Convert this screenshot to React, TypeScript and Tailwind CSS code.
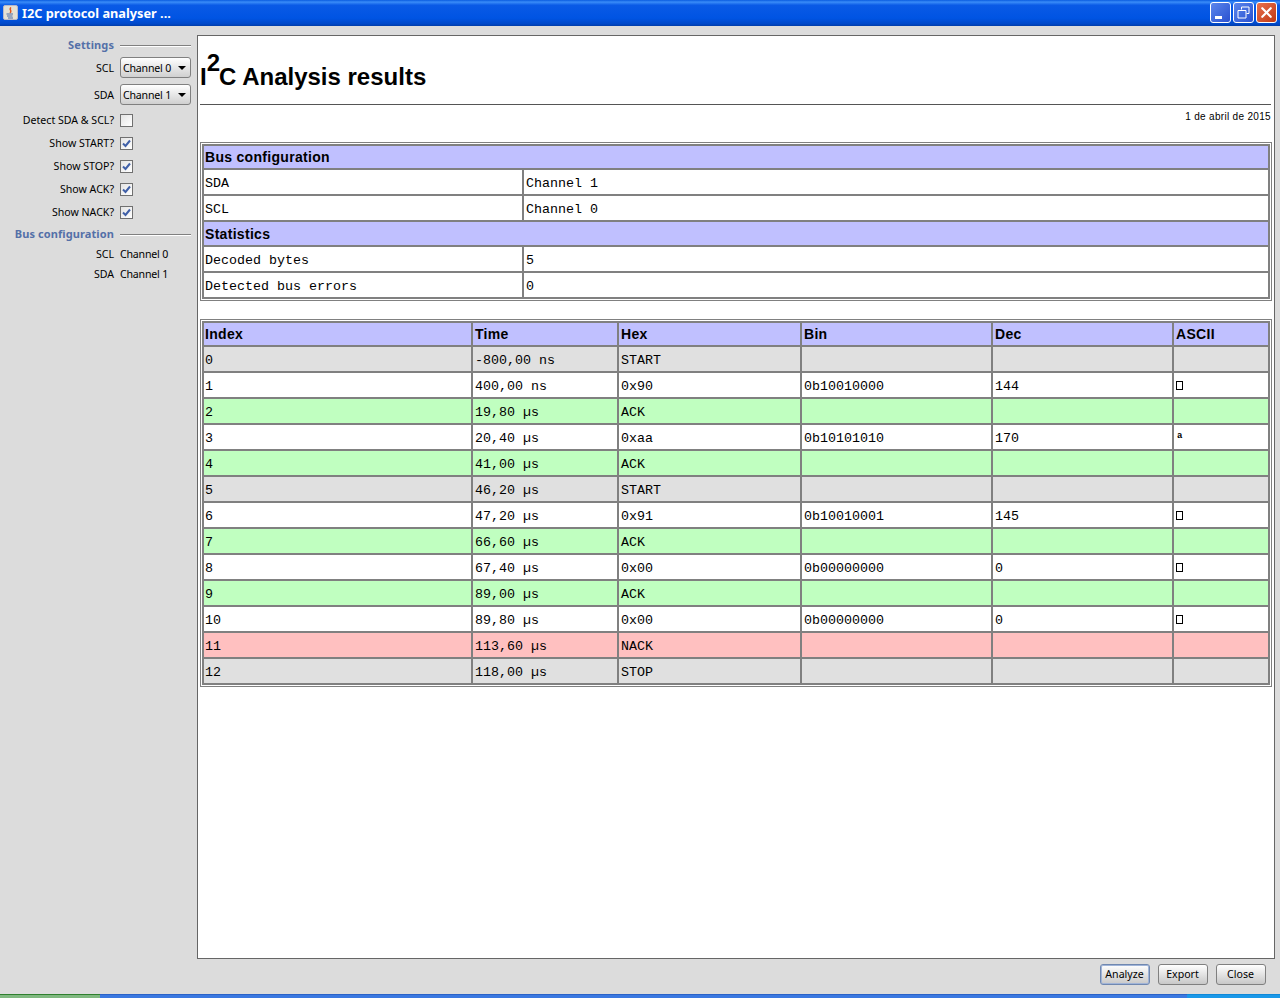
import { X } from "lucide-react";

const configRows = [
  { head: "Bus configuration", h: "h-[24px]" },
  { a: "SDA", b: "Channel 1" },
  { a: "SCL", b: "Channel 0" },
  { head: "Statistics", h: "h-[25px]" },
  { a: "Decoded bytes", b: "5" },
  { a: "Detected bus errors", b: "0" },
];

const columns = ["Index", "Time", "Hex", "Bin", "Dec", "ASCII"];

const dataRows = [
  { bg: "bg-[#e0e0e0]", cells: ["0", "-800,00 ns", "START", "", "", ""] },
  { bg: "bg-white", cells: ["1", "400,00 ns", "0x90", "0b10010000", "144", "box"] },
  { bg: "bg-[#c0ffc0]", cells: ["2", "19,80 µs", "ACK", "", "", ""] },
  { bg: "bg-white", cells: ["3", "20,40 µs", "0xaa", "0b10101010", "170", "ª"] },
  { bg: "bg-[#c0ffc0]", cells: ["4", "41,00 µs", "ACK", "", "", ""] },
  { bg: "bg-[#e0e0e0]", cells: ["5", "46,20 µs", "START", "", "", ""] },
  { bg: "bg-white", cells: ["6", "47,20 µs", "0x91", "0b10010001", "145", "box"] },
  { bg: "bg-[#c0ffc0]", cells: ["7", "66,60 µs", "ACK", "", "", ""] },
  { bg: "bg-white", cells: ["8", "67,40 µs", "0x00", "0b00000000", "0", "box"] },
  { bg: "bg-[#c0ffc0]", cells: ["9", "89,00 µs", "ACK", "", "", ""] },
  { bg: "bg-white", cells: ["10", "89,80 µs", "0x00", "0b00000000", "0", "box"] },
  { bg: "bg-[#ffc0c0]", cells: ["11", "113,60 µs", "NACK", "", "", ""] },
  { bg: "bg-[#e0e0e0]", cells: ["12", "118,00 µs", "STOP", "", "", ""] },
];

function SectionTitle({ title }: { title: string }) {
  return (
    <div className="flex h-[14px] items-center">
      <span className="w-[114px] pb-[2px] text-right text-[11px] font-bold tracking-[0.1px] text-[#5470a8]">{title}</span>
      <div className="ml-[6px] mt-[2px] w-[71px] border-t border-b border-t-[#808080] border-b-white" />
    </div>
  );
}

function Combo({ value }: { value: string }) {
  return (
    <div className="ml-[6px] flex h-[21px] w-[71px] items-center justify-between rounded-[3px] border border-[#808080] bg-linear-to-b from-white to-[#d0d0d0] pl-[2px] pr-[4px]">
      <span className="pt-[2px] tracking-[-0.2px]">{value}</span>
      <div className="h-0 w-0 border-x-[4px] border-t-[4px] border-x-transparent border-t-black" />
    </div>
  );
}

function Check({ checked }: { checked: boolean }) {
  return (
    <div className="ml-[6px] flex h-[13px] w-[13px] items-center justify-center border border-[#707070] bg-linear-to-br from-[#e4e4e4] to-white">
      {checked && (
        <svg width="9" height="9" viewBox="0 0 9 9">
          <path d="M1 4.5 L3.5 7 L8 1.5" fill="none" stroke="#4060a8" strokeWidth="2" />
        </svg>
      )}
    </div>
  );
}

function FormRow({
  label,
  children,
  className,
  labelClass,
}: {
  label: string;
  children: React.ReactNode;
  className: string;
  labelClass?: string;
}) {
  return (
    <div className={`flex items-center ${className}`}>
      <span className={`w-[114px] text-right ${labelClass ?? ""}`}>{label}</span>
      {children}
    </div>
  );
}

function Btn({ label, focused }: { label: string; focused?: boolean }) {
  return (
    <div
      className={`flex h-[21px] w-[50px] items-center justify-center rounded-[3px] border bg-linear-to-b from-white to-[#c8c8c8] pb-[1px] pr-[1px] ${
        focused ? "border-[#7088b0] ring-1 ring-inset ring-[#a0b4d8]" : "border-[#808080]"
      }`}
    >
      {label}
    </div>
  );
}

export default function App() {
  return (
    <div className="flex h-[998px] w-[1280px] flex-col overflow-hidden bg-[#dcdcdc] font-['Noto_Sans',sans-serif] text-[10.6px] leading-none text-black">
      {/* title bar */}
      <div className="flex h-[26px] shrink-0 items-center bg-[linear-gradient(to_bottom,#0a5ce0_0%,#3a8cf8_8%,#0a5ae6_20%,#0054e3_70%,#0048c8_92%,#003ca8_100%)] pb-[1px] pl-[3px] pr-[3px]">
        <div className="flex h-[15px] w-[15px] items-center justify-center rounded-[2px] border border-[#b8b8c8] bg-[#e4e0d4]">
          <svg width="11" height="12" viewBox="0 0 11 12">
            <path d="M6 0.5 C3.5 2.5 7.5 3.5 5 6" fill="none" stroke="#e05820" strokeWidth="1.5" />
            <path d="M1.5 7 H8 M2 9 H7.5 M3 11 H8" stroke="#4a6aa8" strokeWidth="1" />
          </svg>
        </div>
        <span className="ml-[4px] pt-[2px] text-[12.75px] font-bold text-white">I2C protocol analyser ...</span>
        <div className="ml-auto flex gap-[2px]">
          <div className="flex h-[21px] w-[21px] items-end rounded-[3px] border border-white bg-linear-to-br from-[#5c86ec] to-[#2a50d0] pb-[3px] pl-[4px]">
            <div className="h-[3px] w-[7px] bg-white" />
          </div>
          <div className="flex h-[21px] w-[21px] items-center justify-center rounded-[3px] border border-white bg-linear-to-br from-[#5c86ec] to-[#2a50d0]">
            <svg width="13" height="13" viewBox="0 0 13 13" fill="none" stroke="white">
              <path d="M4.5 3.5 V1 H12 V7.5 H9.5" />
              <path d="M1 4.5 H9 V12 H1 Z" />
            </svg>
          </div>
          <div className="flex h-[21px] w-[21px] items-center justify-center rounded-[3px] border border-white bg-linear-to-br from-[#e8704c] to-[#c03810]">
            <X size={17} strokeWidth={3} color="white" />
          </div>
        </div>
      </div>

      <div className="flex min-h-0 flex-1 flex-col pb-[4px]">
        <div className="flex">
          {/* sidebar */}
          <div className="w-[197px] shrink-0 pt-[12px]">
            <SectionTitle title="Settings" />
            <FormRow label="SCL" className="mt-[5px] h-[21px]" labelClass="pt-[2px]">
              <Combo value="Channel 0" />
            </FormRow>
            <FormRow label="SDA" className="mt-[6px] h-[21px]" labelClass="pt-[2px]">
              <Combo value="Channel 1" />
            </FormRow>
            <FormRow label="Detect SDA & SCL?" className="mt-[9px] h-[13px]">
              <Check checked={false} />
            </FormRow>
            <FormRow label="Show START?" className="mt-[10px] h-[13px]">
              <Check checked />
            </FormRow>
            <FormRow label="Show STOP?" className="mt-[10px] h-[13px]">
              <Check checked />
            </FormRow>
            <FormRow label="Show ACK?" className="mt-[10px] h-[13px]">
              <Check checked />
            </FormRow>
            <FormRow label="Show NACK?" className="mt-[10px] h-[13px]">
              <Check checked />
            </FormRow>
            <div className="mt-[8px]">
              <SectionTitle title="Bus configuration" />
            </div>
            <FormRow label="SCL" className="mt-[6px] h-[14px]">
              <span className="ml-[6px] tracking-[-0.2px]">Channel 0</span>
            </FormRow>
            <FormRow label="SDA" className="mt-[6px] h-[14px]">
              <span className="ml-[6px] tracking-[-0.2px]">Channel 1</span>
            </FormRow>
          </div>

          {/* report panel */}
          <div className="mt-[9px] h-[924px] w-[1078px] border border-[#666666] bg-white px-[2px]">
            <div className="mr-[1px] mt-[24px] flex h-[45px] items-end border-b border-b-[#555555] pb-[15px] font-['Liberation_Sans',sans-serif] text-[24px] font-bold leading-none">
              I<sup className="relative -top-[14px] -mr-[1px] align-baseline text-[24px] leading-none">2</sup>C Analysis results
            </div>
            <div className="mr-[1px] mt-[7px] text-right font-['Liberation_Sans',sans-serif] text-[10px] tracking-[0.32px]">
              1 de abril de 2015
            </div>

            <div className="mt-[20px] border border-[#808080] p-[1px]">
              <table className="w-full table-fixed border-collapse font-['Liberation_Mono',monospace] text-[13.33px]">
                <colgroup>
                  <col className="w-[320px]" />
                  <col />
                </colgroup>
                <tbody>
                  {configRows.map((row, i) =>
                    row.head ? (
                      <tr key={i} className={row.h}>
                        <td
                          colSpan={2}
                          className="border-2 border-[#808080] bg-[#c0c0ff] pl-[1px] pr-[2px] font-['Liberation_Sans',sans-serif] text-[14px] font-bold leading-none tracking-[0.3px]"
                        >
                          {row.head}
                        </td>
                      </tr>
                    ) : (
                      <tr key={i} className="h-[26px]">
                        <td className="border-2 border-[#808080] pl-[1px] pr-[2px] pt-[4px] leading-none">{row.a}</td>
                        <td className="border-2 border-[#808080] px-[2px] pt-[4px] leading-none">{row.b}</td>
                      </tr>
                    )
                  )}
                </tbody>
              </table>
            </div>

            <div className="mt-[18px] border border-[#808080] p-[1px]">
              <table className="w-full table-fixed border-collapse font-['Liberation_Mono',monospace] text-[13.33px]">
                <colgroup>
                  <col className="w-[269px]" />
                  <col className="w-[146px]" />
                  <col className="w-[183px]" />
                  <col className="w-[191px]" />
                  <col className="w-[181px]" />
                  <col />
                </colgroup>
                <thead>
                  <tr className="h-[24px]">
                    {columns.map((c, j) => (
                      <th
                        key={c}
                        className={`border-2 border-[#808080] bg-[#c0c0ff] pr-[2px] text-left font-['Liberation_Sans',sans-serif] text-[14px] font-bold leading-none tracking-[0.3px] ${
                          j === 0 ? "pl-[1px]" : "pl-[2px]"
                        }`}
                      >
                        {c}
                      </th>
                    ))}
                  </tr>
                </thead>
                <tbody>
                  {dataRows.map((row) => (
                    <tr key={row.cells[0]} className="h-[26px]">
                      {row.cells.map((cell, j) => (
                        <td
                          key={j}
                          className={`border-2 border-[#808080] pr-[2px] pt-[4px] leading-none ${row.bg} ${
                            j === 0 ? "pl-[1px]" : "pl-[2px]"
                          }`}
                        >
                          {cell === "box" ? (
                            <div className="relative -top-[2px] h-[9px] w-[7px] border border-black" />
                          ) : cell === "ª" ? (
                            <span className="relative -top-[3px] ml-[1px] block text-[9px] font-bold">a</span>
                          ) : (
                            cell
                          )}
                        </td>
                      ))}
                    </tr>
                  ))}
                </tbody>
              </table>
            </div>
          </div>
        </div>

        {/* buttons */}
        <div className="mt-[5px] flex justify-end gap-[8px] pr-[14px]">
          <Btn label="Analyze" focused />
          <Btn label="Export" />
          <Btn label="Close" />
        </div>
      </div>

      {/* taskbar sliver */}
      <div className="flex h-[4px] shrink-0">
        <div className="w-[100px] border-t border-t-[#2f7f2f] bg-[#80b880]" />
        <div className="flex-1 border-t border-t-[#2a62c8] bg-[#3a78e0]" />
        <div className="w-[93px] border-t border-t-[#0e88d8] bg-[#1a98e8]" />
      </div>
    </div>
  );
}
